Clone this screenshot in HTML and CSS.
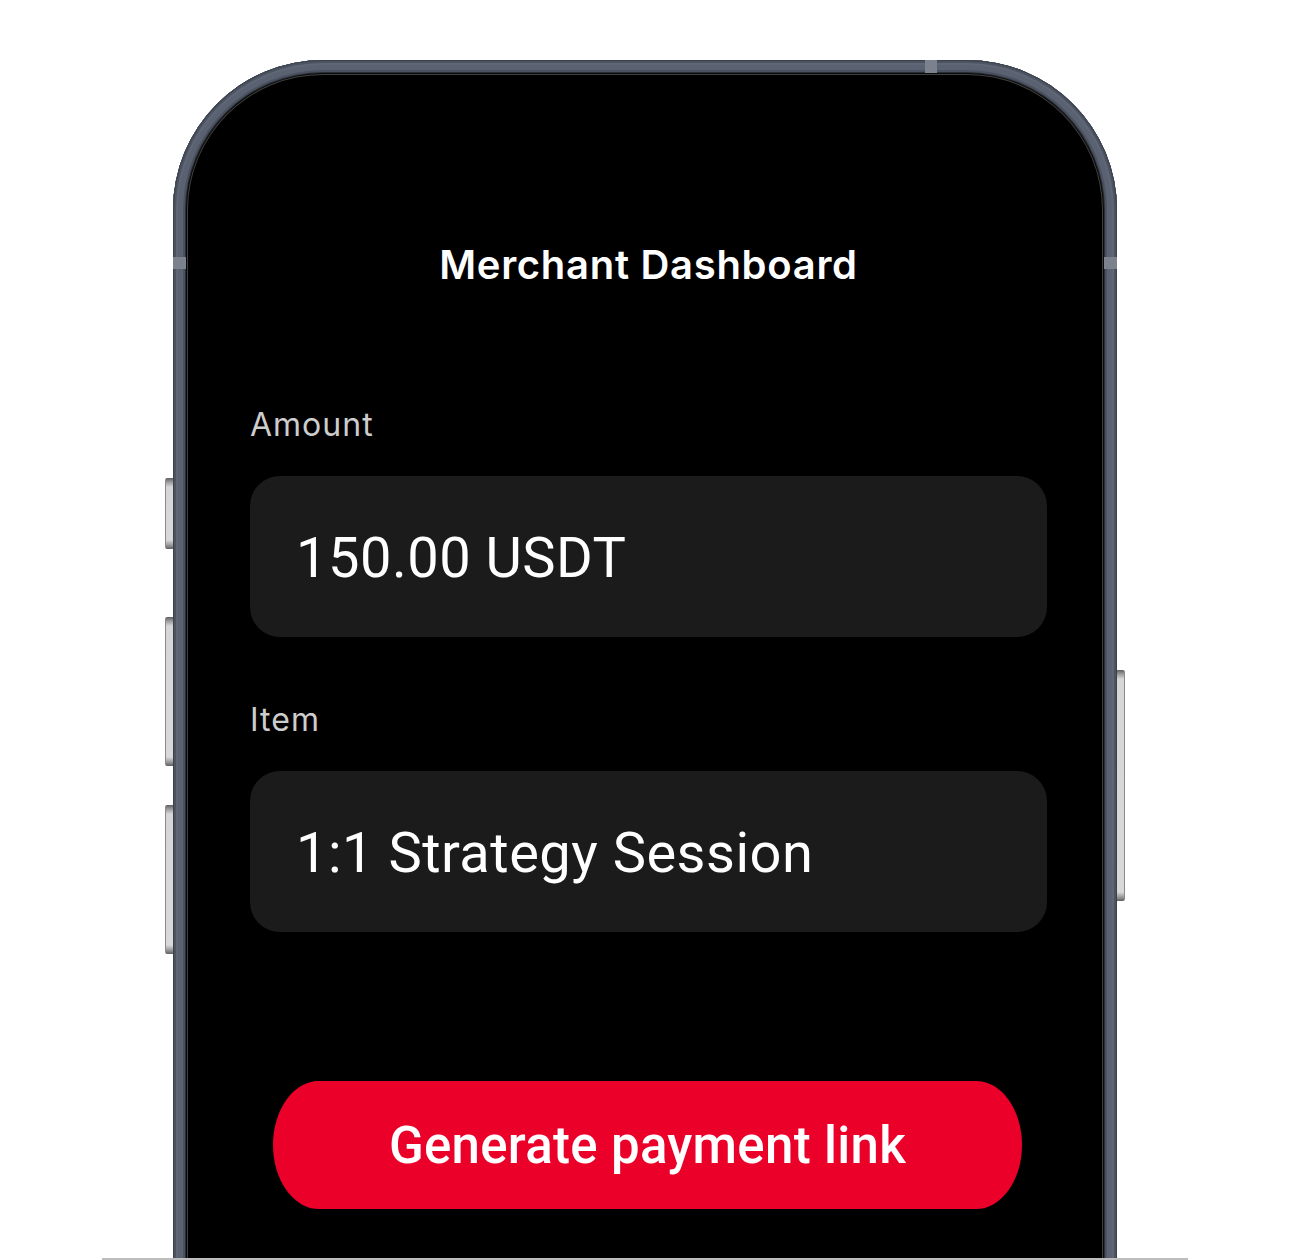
FILE: index.html
```html
<!DOCTYPE html>
<html lang="en">
<head>
<meta charset="utf-8">
<title>Merchant Dashboard</title>
<link rel="stylesheet" href="styles.css">
</head>
<body>
<div class="page">
  <div class="stage">
    <div class="phone">
      <span class="side-btn left b1"></span>
      <span class="side-btn left b2"></span>
      <span class="side-btn left b3"></span>
      <span class="side-btn right b4"></span>
      <span class="band band-top"></span>
      <span class="band band-left"></span>
      <span class="band band-right"></span>
      <div class="screen">
        <div class="content">
          <h1 class="title">Merchant Dashboard</h1>
          <div class="field field-first">
            <div class="label">Amount</div>
            <div class="input">150.00 USDT</div>
          </div>
          <div class="field">
            <div class="label">Item</div>
            <div class="input">1:1 Strategy Session</div>
          </div>
          <button class="cta">Generate payment link</button>
        </div>
      </div>
    </div>
  </div>
  <div class="floor"></div>
</div>
</body>
</html>
```

FILE: styles.css
```css
* { box-sizing: border-box; }

html, body {
  margin: 0;
  padding: 0;
  background: #ffffff;
}

body {
  font-family: Roboto, "Liberation Sans", sans-serif;
}

.page {
  width: 1290px;
  height: 1260px;
  overflow: hidden;
}

.stage {
  height: 1258px;
  overflow: hidden;
  padding-top: 60px;
  padding-left: 173px;
}

.phone {
  position: relative;
  width: 944px;
  height: 1260px;
  padding: 13px 13px 0;
  border-radius: 150px 150px 0 0;
  background: #565e6c;
  box-shadow:
    inset 0 0 0 1px #3b414d,
    inset 0 0 0 3px #4c5361,
    inset 0 0 0 5px #5f6777,
    inset 0 0 0 10px #5a6272,
    inset 0 0 0 12px #4a5160,
    inset 0 0 0 13px #2a2e36;
}

.band {
  position: absolute;
  background: #7b818d;
}

.band-top {
  top: 0;
  left: 752px;
  width: 12px;
  height: 13px;
}

.band-left {
  top: 197px;
  left: 0;
  width: 13px;
  height: 12px;
}

.band-right {
  top: 197px;
  right: 0;
  width: 13px;
  height: 12px;
}

.side-btn {
  position: absolute;
  width: 8px;
  background: linear-gradient(to bottom, #5e5e5e 0, #9a9a9a 4px, #d6d6d6 9px, #d9d9d9 calc(100% - 9px), #9a9a9a calc(100% - 4px), #5e5e5e 100%);
}

.side-btn.left {
  left: -8px;
  border-left: 1px solid #8a8a8a;
  border-radius: 2px 0 0 2px;
}

.side-btn.right {
  right: -8px;
  border-right: 1px solid #8a8a8a;
  border-radius: 0 2px 2px 0;
}

.b1 { top: 418px; height: 71px; }
.b2 { top: 557px; height: 149px; }
.b3 { top: 745px; height: 149px; }
.b4 { top: 610px; height: 231px; }

.screen {
  height: 100%;
  background: #000000;
  border-radius: 137px 137px 0 0;
  box-shadow:
    inset 0 0 0 1px #0a0a0a,
    inset 0 0 0 2px #3e3e3e;
}

.content {
  display: flex;
  flex-direction: column;
  padding: 171px 57px 0 64px;
}

.title {
  margin: 0;
  font-family: Inter, Roboto, sans-serif;
  font-size: 40px;
  line-height: 41px;
  font-weight: 600;
  letter-spacing: 0.7px;
  color: #ffffff;
  text-align: center;
}

.field {
  display: flex;
  flex-direction: column;
  margin-top: 67px;
}

.field-first {
  margin-top: 124px;
}

.label {
  font-family: Inter, Roboto, sans-serif;
  font-size: 32px;
  line-height: 32px;
  font-weight: 400;
  letter-spacing: 1px;
  color: #cdcdcd;
  margin-bottom: 35px;
}

.input {
  height: 161px;
  padding: 54px 0 51px 46px;
  background: #1b1b1b;
  border-radius: 30px;
  font-size: 56px;
  line-height: 56px;
  font-weight: 400;
  letter-spacing: 0.5px;
  color: #ffffff;
}

.cta {
  align-self: flex-start;
  margin: 149px 0 0 23px;
  width: 749px;
  height: 128px;
  border: none;
  border-radius: 46px / 64px;
  background: #ea0029;
  color: #ffffff;
  font-family: Roboto, "Liberation Sans", sans-serif;
  font-size: 51px;
  line-height: 51px;
  font-weight: 500;
  letter-spacing: 0.3px;
  padding: 0;
}

.floor {
  height: 2px;
  width: 1086px;
  margin-left: 102px;
  background: #bdbdbd;
}
```
